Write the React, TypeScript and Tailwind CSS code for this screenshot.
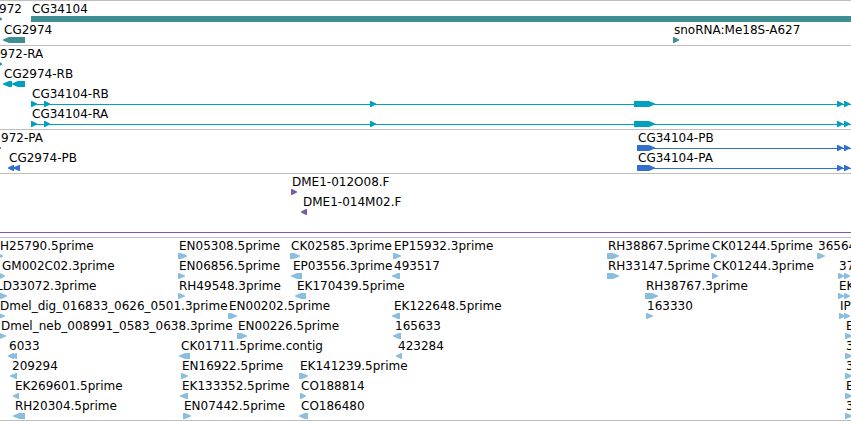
type Strand = '+' | '-';

interface Label {
  x: number;
  text: string;
}

// [start, end, strand, square]: square spans are drawn without an arrow head
type Span = [number, number, Strand, boolean?];

interface Row {
  labels: Label[];
  spans: Span[];
  // start of the thin line that joins the spans up to the right edge
  lineFrom?: number;
}

interface Track {
  name: string;
  color: string;
  className: string;
  rows: Row[];
}

const GLYPH_HEIGHT = 6;
const MAX_HEAD = 7;

const transcriptSpans: Span[] = [
  [31, 37, '+'],
  [44, 50, '+'],
  [370, 376, '+'],
  [634, 655, '+'],
  [837, 843, '+'],
  [844, 850, '+'],
];

const proteinSpans: Span[] = [
  [637, 655, '+'],
  [837, 843, '+'],
  [844, 850, '+'],
];

const tracks: Track[] = [
  {
    name: 'Genes',
    color: '#3e8e93',
    className: 'pt-px pb-0.5 gap-px',
    rows: [
      {
        labels: [{ x: -2, text: '972' }, { x: 31, text: 'CG34104' }],
        spans: [[-3, 2, '+'], [31, 4000, '+', true]],
      },
      {
        labels: [{ x: 3, text: 'CG2974' }, { x: 673, text: 'snoRNA:Me18S-A627' }],
        spans: [[3, 25, '-'], [673, 679, '+']],
      },
    ],
  },
  {
    name: 'Transcripts',
    color: '#00a0c0',
    className: 'pt-px pb-0.5',
    rows: [
      { labels: [{ x: -1, text: '972-RA' }], spans: [[-3, 2, '+']] },
      { labels: [{ x: 3, text: 'CG2974-RB' }], spans: [[3, 12, '-'], [12, 25, '-']] },
      { labels: [{ x: 31, text: 'CG34104-RB' }], spans: transcriptSpans, lineFrom: 31 },
      { labels: [{ x: 31, text: 'CG34104-RA' }], spans: transcriptSpans, lineFrom: 31 },
    ],
  },
  {
    name: 'Proteins',
    color: '#336fcc',
    className: 'pt-px pb-0.5',
    rows: [
      {
        labels: [{ x: 0, text: '972-PA' }, { x: 637, text: 'CG34104-PB' }],
        spans: [[-4, 1, '+'], ...proteinSpans],
        lineFrom: 637,
      },
      {
        labels: [{ x: 8, text: 'CG2974-PB' }, { x: 637, text: 'CG34104-PA' }],
        spans: [[8, 14, '-'], [13, 20, '-'], ...proteinSpans],
        lineFrom: 637,
      },
    ],
  },
  {
    name: 'Insertions',
    color: '#7a5ca6',
    className: 'pt-px pb-0.5',
    rows: [
      { labels: [{ x: 291, text: 'DME1-012O08.F' }], spans: [[291, 297, '+']] },
      { labels: [{ x: 302, text: 'DME1-014M02.F' }], spans: [[301, 307, '-']] },
      { labels: [], spans: [], lineFrom: 0 },
    ],
  },
  {
    name: 'ESTs',
    color: '#8abedf',
    className: 'pt-px pb-px border-b',
    rows: [
      {
        labels: [
          { x: -1, text: 'H25790.5prime' },
          { x: 178, text: 'EN05308.5prime' },
          { x: 290, text: 'CK02585.3prime' },
          { x: 393, text: 'EP15932.3prime' },
          { x: 607, text: 'RH38867.5prime' },
          { x: 711, text: 'CK01244.5prime' },
          { x: 817, text: '36564' },
        ],
        spans: [
          [-3, 3, '+'], [178, 187, '+'], [290, 300, '+'], [393, 401, '+'],
          [607, 619, '+'], [711, 717, '+'], [817, 825, '+'],
        ],
      },
      {
        labels: [
          { x: 1, text: 'GM002C02.3prime' },
          { x: 178, text: 'EN06856.5prime' },
          { x: 292, text: 'EP03556.3prime' },
          { x: 393, text: '493517' },
          { x: 607, text: 'RH33147.5prime' },
          { x: 712, text: 'CK01244.3prime' },
          { x: 838, text: '37' },
        ],
        spans: [
          [-1, 5, '+'], [178, 185, '+'], [291, 302, '-'], [392, 400, '-'],
          [607, 619, '+'], [712, 718, '+'], [838, 844, '+'], [844, 850, '+'],
        ],
      },
      {
        labels: [
          { x: -5, text: 'LD33072.3prime' },
          { x: 178, text: 'RH49548.3prime' },
          { x: 296, text: 'EK170439.5prime' },
          { x: 645, text: 'RH38767.3prime' },
          { x: 838, text: 'EK' },
        ],
        spans: [
          [-1, 7, '+'], [178, 185, '+'], [295, 306, '-'], [645, 658, '+'],
          [838, 844, '+'], [844, 850, '+'],
        ],
      },
      {
        labels: [
          { x: -1, text: 'Dmel_dig_016833_0626_0501.3prime' },
          { x: 228, text: 'EN00202.5prime' },
          { x: 393, text: 'EK122648.5prime' },
          { x: 646, text: '163330' },
          { x: 839, text: 'IP0' },
        ],
        spans: [
          [-2, 5, '+'], [228, 237, '+'], [392, 400, '-'], [646, 653, '+'],
          [839, 845, '+'], [844, 850, '+'],
        ],
      },
      {
        labels: [
          { x: 0, text: 'Dmel_neb_008991_0583_0638.3prime' },
          { x: 237, text: 'EN00226.5prime' },
          { x: 394, text: '165633' },
          { x: 845, text: 'E' },
        ],
        spans: [[-1, 6, '+'], [237, 247, '+'], [393, 401, '-'], [845, 852, '+']],
      },
      {
        labels: [
          { x: 8, text: '6033' },
          { x: 180, text: 'CK01711.5prime.contig' },
          { x: 397, text: '423284' },
          { x: 845, text: '3' },
        ],
        spans: [[8, 14, '-'], [11, 17, '-'], [179, 190, '-'], [396, 402, '-'], [845, 852, '+']],
      },
      {
        labels: [
          { x: 11, text: '209294' },
          { x: 181, text: 'EN16922.5prime' },
          { x: 299, text: 'EK141239.5prime' },
          { x: 845, text: '3' },
        ],
        spans: [[10, 17, '-'], [181, 188, '+'], [299, 308, '+'], [845, 852, '+']],
      },
      {
        labels: [
          { x: 14, text: 'EK269601.5prime' },
          { x: 181, text: 'EK133352.5prime' },
          { x: 300, text: 'CO188814' },
          { x: 845, text: 'E' },
        ],
        spans: [[13, 19, '-'], [180, 188, '-'], [300, 306, '+'], [845, 852, '+']],
      },
      {
        labels: [
          { x: 14, text: 'RH20304.5prime' },
          { x: 183, text: 'EN07442.5prime' },
          { x: 300, text: 'CO186480' },
          { x: 845, text: '3' },
        ],
        spans: [[13, 25, '-'], [183, 191, '+'], [299, 308, '-'], [845, 852, '+']],
      },
    ],
  },
];

function spanPath([start, end, strand, square]: Span) {
  const h = GLYPH_HEIGHT;
  if (square) return `M${start} 0H${end}V${h}H${start}Z`;
  const head = Math.min(MAX_HEAD, end - start);
  if (strand === '+') {
    return `M${start} 0H${end - head + 1}L${end} 2.5V3.5L${end - head + 1} ${h}H${start}Z`;
  }
  return `M${end} 0H${start + head - 1}L${start} 2.5V3.5L${start + head - 1} ${h}H${end}Z`;
}

function TrackRow({ row, color }: { row: Row; color: string }) {
  return (
    <div>
      <div className="relative h-3.5">
        {row.labels.map((label) => (
          <span
            key={label.x}
            className="absolute top-0 ml-px whitespace-nowrap"
            style={{ left: label.x }}
          >
            {label.text}
          </span>
        ))}
      </div>
      <svg className="block w-full h-1.5" fill={color} aria-hidden="true">
        {row.lineFrom !== undefined && (
          <rect x={row.lineFrom} y="3" width="100%" height="1" />
        )}
        {row.spans.map((span) => (
          <path key={span[0]} d={spanPath(span)} />
        ))}
      </svg>
    </div>
  );
}

export default function App() {
  return (
    <main className="w-full overflow-hidden bg-white text-black text-[12px] leading-[14px] font-['DejaVu_Sans',sans-serif]">
      {tracks.map((track) => (
        <section
          key={track.name}
          aria-label={track.name}
          className={`flex flex-col border-t border-[#bebebe] ${track.className}`}
        >
          {track.rows.map((row, i) => (
            <TrackRow key={i} row={row} color={track.color} />
          ))}
        </section>
      ))}
    </main>
  );
}
